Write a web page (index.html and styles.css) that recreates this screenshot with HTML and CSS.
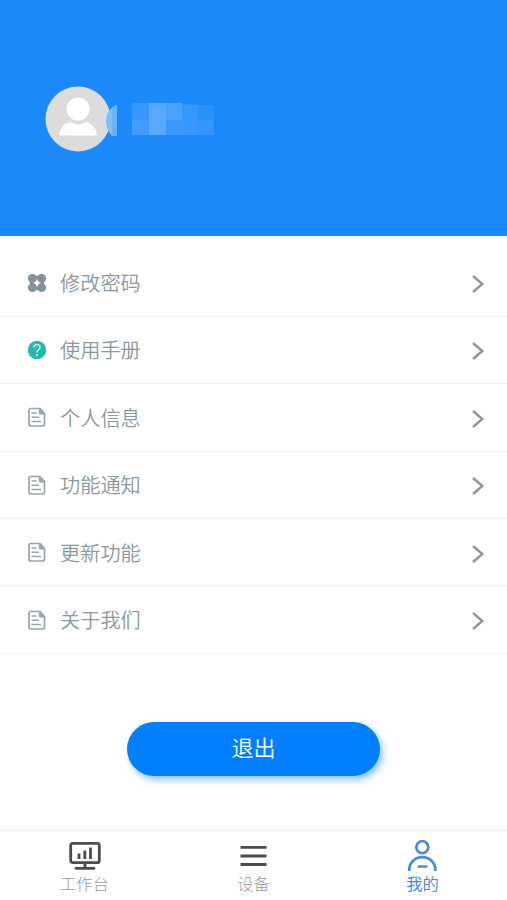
FILE: index.html
```html
<!DOCTYPE html>
<html lang="zh-CN">

<head>
    <meta charset="UTF-8">
    <meta name="viewport" content="width=device-width, initial-scale=1.0">
    <title>我的</title>
    <link rel="stylesheet" href="styles.css">
</head>

<body>
    <svg class="defs">
        <symbol id="doc" viewBox="0 0 20 20">
            <path d="M4 1.500h9l4.500 5V17q0 2-2 2H4q-2 0-2-2V3.500q0-2 2-2z" fill="none" stroke="#98a5ab" stroke-width="1.700"/>
            <path d="M12.300 1.500v5.500h5.200z" fill="#98a5ab" stroke="#98a5ab"/>
            <path d="M4.500 6h5M4.500 10.300h7.500M4.500 14.500h9.500" stroke="#98a5ab" stroke-width="1.600"/>
        </symbol>
        <symbol id="arrow" viewBox="0 0 14 20">
            <path d="M2 2l9.300 8L2 18" fill="none" stroke="#8e999f" stroke-width="2.500"/>
        </symbol>
    </svg>

    <div class="header">
        <svg class="avatar" viewBox="0 0 66 66">
            <circle cx="33" cy="33" r="32.500" fill="#dcdcdc"/>
            <circle cx="33" cy="23" r="11.500" fill="#fff"/>
            <path d="M15 49.500q-1 0-.7-2 1.200-7 7.700-10.500 2-1 4-.5 7 4 14 0 2-.5 4 .5 6.500 3.500 7.700 10.500.3 2-.7 2z" fill="#fff"/>
        </svg>
        <svg class="name" viewBox="0 0 108 34">
            <path d="M11 2v31H6Q0 27 0 18T7 4z" fill="#83bdf8"/>
            <path d="M6 4l5-2v31H6z" fill="#6ab1fc"/>
            <path d="M26 0h17v17H26z" fill="#3797fc"/>
            <path d="M26 17h17v15H26z" fill="#429dfc"/>
            <path d="M43 0h17v32H43z" fill="#59a9fe"/>
            <path d="M60 0h16v17H60z" fill="#4ba1fd"/>
            <path d="M60 17h16v15H60z" fill="#3999fc"/>
            <path d="M76 1l15 1v30H76z" fill="#3797fc"/>
            <path d="M91 2h17v15H91z" fill="#2991fb"/>
            <path d="M91 17h17v15H91z" fill="#3496fc"/>
        </svg>
    </div>

    <div class="list">
        <div class="item">
            <svg class="icon" viewBox="0 0 20 20" fill="#84929b">
                <circle cx="5.400" cy="5.400" r="4.500"/>
                <circle cx="14.600" cy="5.400" r="4.500"/>
                <circle cx="5.400" cy="14.600" r="4.500"/>
                <circle cx="14.600" cy="14.600" r="4.500"/>
                <path d="M7 3h6v3H7zM7 14h6v3H7zM3 7h3v6H3zM14 7h3v6h-3z"/>
            </svg>
            <span>修改密码</span>
            <svg class="arrow"><use href="#arrow"/></svg>
        </div>
        <div class="item">
            <svg class="icon" viewBox="0 0 20 20">
                <circle cx="10" cy="10" r="9.200" fill="#24b8ae"/>
                <path d="M7 7.500q0-3 3-3t3 2.700q0 1.500-1.600 2.600T10 12.500" fill="none" stroke="#c5f5f0" stroke-width="1.600"/>
                <circle cx="10" cy="15" r="1.100" fill="#c5f5f0"/>
            </svg>
            <span>使用手册</span>
            <svg class="arrow"><use href="#arrow"/></svg>
        </div>
        <div class="item">
            <svg class="icon"><use href="#doc"/></svg>
            <span>个人信息</span>
            <svg class="arrow"><use href="#arrow"/></svg>
        </div>
        <div class="item">
            <svg class="icon"><use href="#doc"/></svg>
            <span>功能通知</span>
            <svg class="arrow"><use href="#arrow"/></svg>
        </div>
        <div class="item">
            <svg class="icon"><use href="#doc"/></svg>
            <span>更新功能</span>
            <svg class="arrow"><use href="#arrow"/></svg>
        </div>
        <div class="item">
            <svg class="icon"><use href="#doc"/></svg>
            <span>关于我们</span>
            <svg class="arrow"><use href="#arrow"/></svg>
        </div>
    </div>

    <button class="logout">退出</button>

    <div class="tabbar">
        <div class="tab">
            <svg class="tab-icon" viewBox="0 0 32 32" fill="none" stroke="#4c4c4c">
                <rect x="1.700" y="3.300" width="28.600" height="19.400" rx="2" stroke-width="2.800"/>
                <path d="M16 23v5" stroke-width="3"/>
                <path d="M7 28.300h18" stroke-width="2.700" stroke-linecap="round"/>
                <path d="M10 13.500v5.500M15.800 10.500V19M21.500 7.500V19" stroke-width="2.800"/>
            </svg>
            <span>工作台</span>
        </div>
        <div class="tab">
            <svg class="tab-icon" viewBox="0 0 32 32">
                <path d="M2.500 7.300h26M2.500 16h26M2.500 24.500h26" stroke="#4c4c4c" stroke-width="2.800"/>
            </svg>
            <span>设备</span>
        </div>
        <div class="tab active">
            <svg class="tab-icon" viewBox="0 0 32 32" fill="none" stroke="#488bdd" stroke-width="2.700">
                <circle cx="15.300" cy="7.200" r="6"/>
                <path d="M2.300 31v-1.500a13 12.300 0 0 1 26 0V31M10.800 26.500h9.500"/>
            </svg>
            <span>我的</span>
        </div>
    </div>
</body>

</html>
```

FILE: styles.css
```css
* {
    box-sizing: border-box;
}

body {
    margin: 0;
    height: 900px;
    display: flex;
    flex-direction: column;
    background-color: #fff;
    font-family: "Noto Sans CJK SC", sans-serif;
}

.defs {
    display: none;
}

.header {
    height: 236px;
    padding: 86px 0 0 45.4px;
    display: flex;
    align-items: flex-start;
    background-color: #1b89fa;
}

.avatar {
    width: 66px;
    height: 66px;
}

.name {
    width: 108px;
    height: 34px;
    margin: 17px 0 0 -5.4px;
}

.list {
    padding-top: 13.4px;
}

.item {
    height: 67.4px;
    padding: 0 22px 0 27px;
    display: flex;
    align-items: center;
    border-bottom: 1px solid #eeeff0;
    color: #8b999f;
    font-size: 20.2px;
    font-weight: 350;
}

.item span {
    flex: 1;
    margin-left: 13px;
}

.icon {
    width: 20px;
    height: 20px;
}

.arrow {
    width: 14px;
    height: 20px;
    margin-top: 3px;
}

.logout {
    width: 253px;
    height: 54px;
    margin: 68px auto 0;
    padding: 0 0 5px;
    border: none;
    border-radius: 27px;
    background-color: #0080ff;
    box-shadow: 3px 4px 7px rgba(0, 128, 255, 0.45);
    color: #fff;
    font-family: inherit;
    font-size: 22px;
    font-weight: 350;
}

.tabbar {
    height: 70px;
    margin-top: auto;
    display: flex;
    border-top: 1px solid #eee;
}

.tab {
    flex: 1;
    padding-top: 9px;
    display: flex;
    flex-direction: column;
    align-items: center;
    color: #999;
    font-size: 16.3px;
    font-weight: 300;
    line-height: 23px;
}

.tab-icon {
    width: 32px;
    height: 32px;
}

.active {
    color: #488bdd;
    font-weight: 400;
}
```
